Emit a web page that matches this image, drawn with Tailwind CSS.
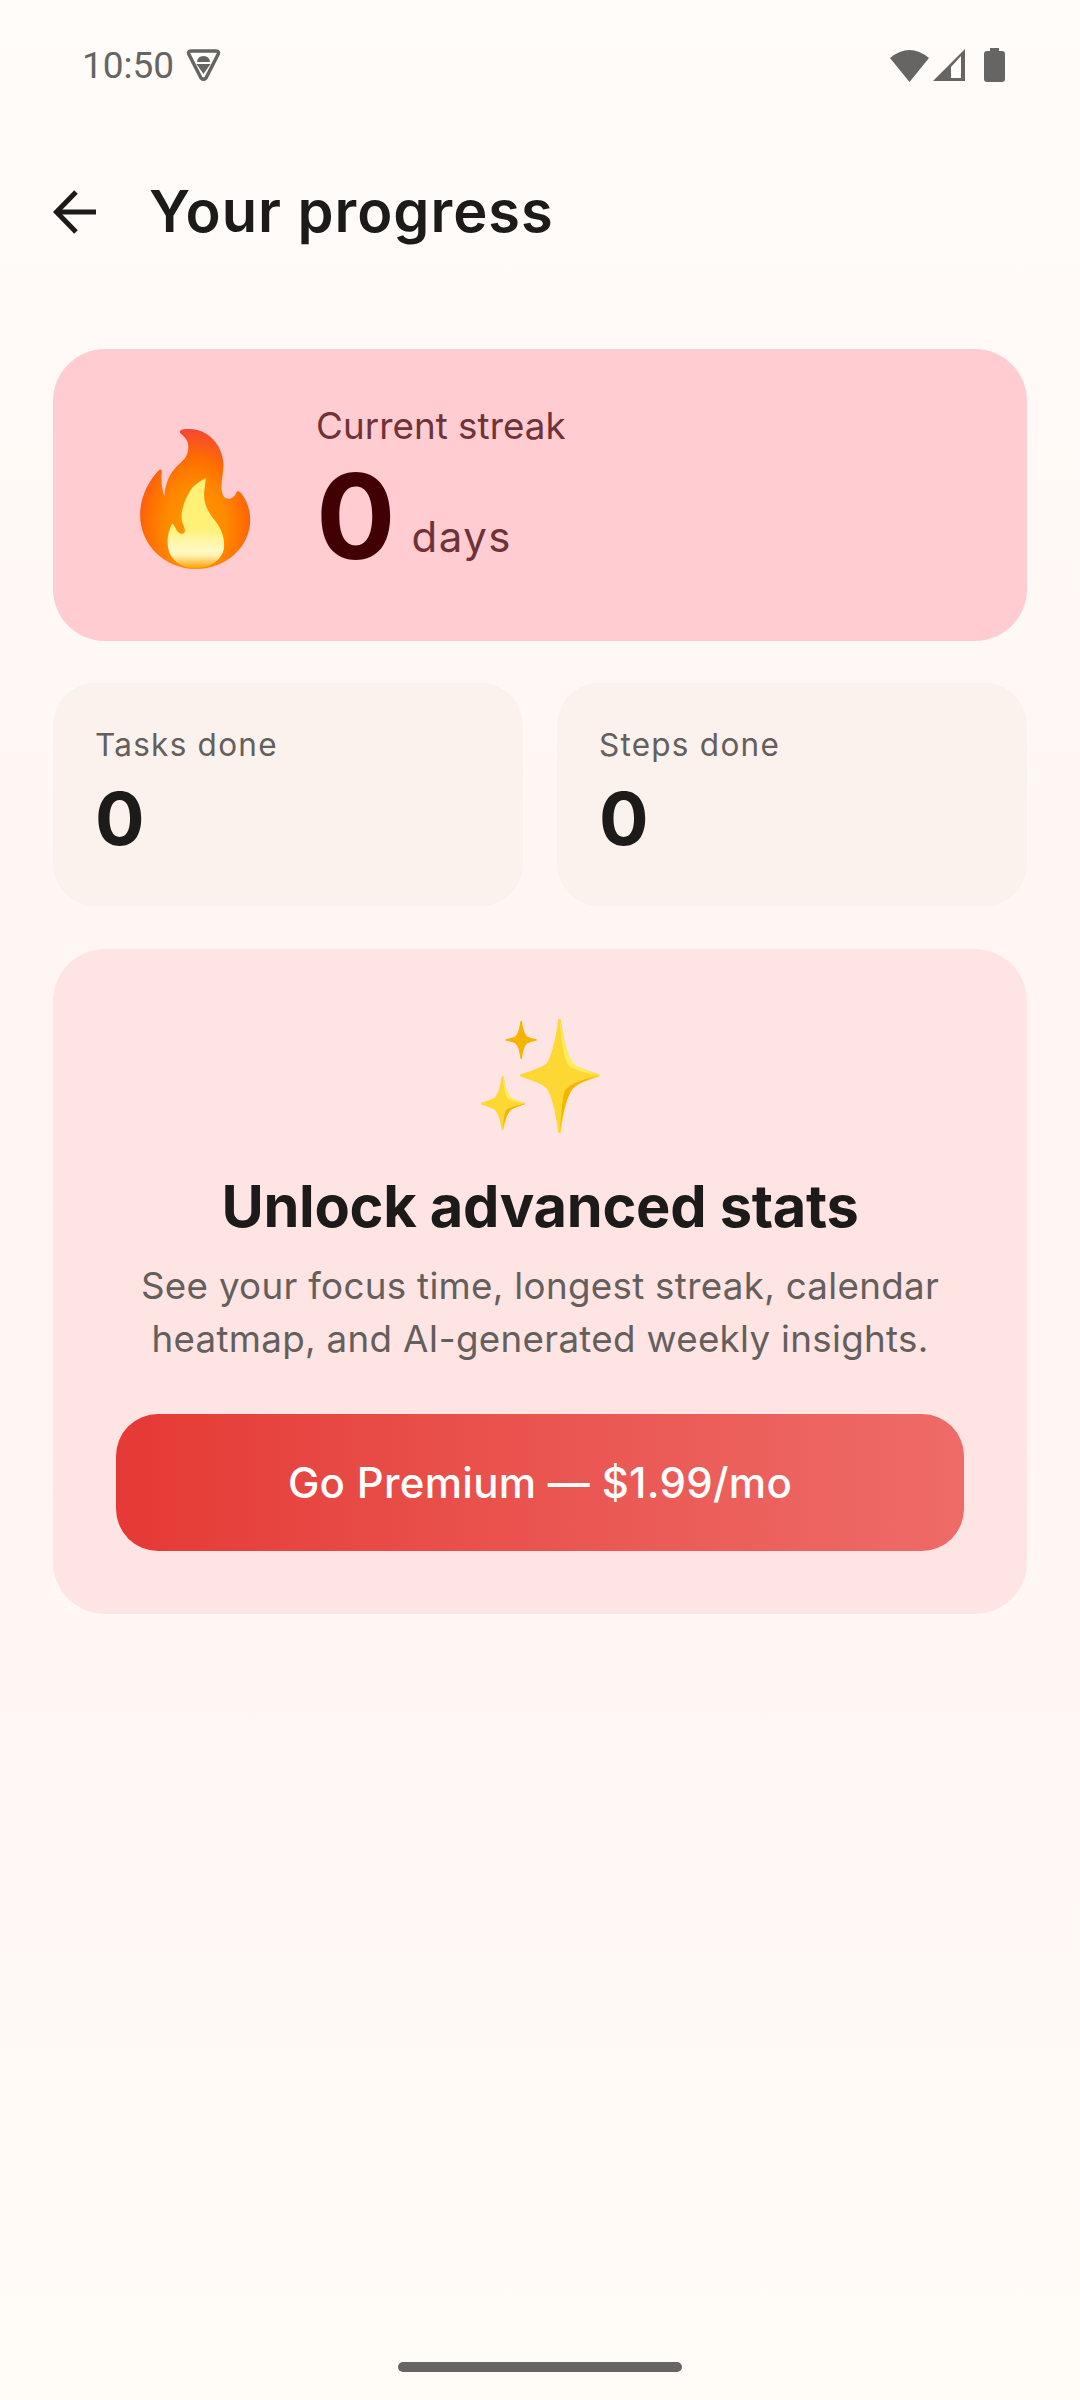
<!DOCTYPE html>
<html lang="en">
<head>
  <meta charset="UTF-8" />
  <meta name="viewport" content="width=device-width, initial-scale=1.0" />
  <title>Your progress</title>
  <script src="https://cdn.jsdelivr.net/npm/@tailwindcss/browser@4"></script>
</head>
<body class="bg-[#fff9f6] font-['Inter',sans-serif]">
  <div class="relative w-[1080px] h-[2400px] overflow-hidden bg-gradient-to-b from-[#fffcf9] via-[#fff5f2] to-[#fffbf7]">

    <!-- Status bar -->
    <div class="h-[130px] pl-[82px] pr-[75px] flex items-center justify-between text-[#666563]">
      <div class="flex items-center gap-[12px]">
        <span class="font-['Roboto',sans-serif] text-[37px] leading-none">10:50</span>
        <svg class="w-[35px] h-[34px]" viewBox="0 0 35 34">
          <path d="M5 3h25q3.500 0 2 3.500L20 30q-2.500 2.500-5 0L3 6.500Q1.500 3 5 3Z" fill="none" stroke="#666563" stroke-width="3.500" stroke-linejoin="round"/>
          <path d="M11 14q.5-6 6.500-6t6.500 6Z" fill="#666563"/>
          <path d="M10.500 16h14l-7 10Z" fill="#666563"/>
        </svg>
      </div>
      <div class="flex items-center">
        <svg class="w-[39px] h-[33px]" viewBox="0 0 39 33"><path d="M0 9Q19.500-7 39 9L19.500 33Z" fill="#666563"/></svg>
        <svg class="w-[32px] h-[32px] ml-[4px]" viewBox="0 0 32 32"><path d="M32 0V32H0Z" fill="#666563"/><path d="M28 7 18 18V29H28Z" fill="#fffcf9"/></svg>
        <svg class="w-[21px] h-[34px] ml-[19px]" viewBox="0 0 21 34"><path d="M6 0h9v3h3q3 0 3 3v25q0 3-3 3H3q-3 0-3-3V6q0-3 3-3h3Z" fill="#666563"/></svg>
      </div>
    </div>

    <!-- Header -->
    <div class="mt-[40px] h-[84px] pl-[53px] flex items-center">
      <svg class="w-[44px] h-[44px]" viewBox="0 0 44 44" fill="none" stroke="#1c1b19" stroke-width="5">
        <path d="M43 22H4"/>
        <path d="M23 2 3.500 22 23 42"/>
      </svg>
      <h1 class="ml-[52px] text-[57.750px] leading-none tracking-[1px] font-semibold text-[#1c1b19]">Your progress</h1>
    </div>

    <main class="px-[53px] pt-[95px] flex flex-col">

      <!-- Streak -->
      <section class="h-[292px] rounded-[52px] bg-[#ffccd1] flex items-center pl-[86px]">
        <svg class="w-[112px] h-[140px] mt-[8px]" viewBox="90 57 326 413">
          <defs>
            <radialGradient id="flameOuter" gradientUnits="userSpaceOnUse" cx="255" cy="345" r="295" gradientTransform="translate(255 345) scale(.72 1) translate(-255 -345)">
              <stop offset="0" stop-color="#ff9800"/>
              <stop offset=".42" stop-color="#ff8a00"/>
              <stop offset=".68" stop-color="#ff6d00"/>
              <stop offset="1" stop-color="#f44336"/>
            </radialGradient>
            <linearGradient id="flameInner" x1="0" y1="0" x2="0" y2="1">
              <stop offset="0" stop-color="#fff176"/>
              <stop offset=".55" stop-color="#fff176"/>
              <stop offset=".8" stop-color="#fff9c4"/>
              <stop offset=".86" stop-color="#fff3b0"/>
              <stop offset="1" stop-color="#ffa000"/>
            </linearGradient>
          </defs>
          <path fill="url(#flameOuter)" d="M210 62C215 55 240 56 260 60C300 70 335 110 337 160C338 190 325 225 335 250C342 268 365 268 375 245C378 238 382 240 388 245C405 265 416 295 416 325C416 405 345 470 255 470C165 470 91 400 91 310C91 260 115 210 147 178C152 174 156 178 155 185C152 205 155 235 163 255C165 215 180 185 205 162C225 145 235 130 233 105C232 90 222 80 212 72C208 68 207 65 210 62Z"/>
          <path fill="url(#flameInner)" d="M284 202C286 205 282 225 280 245C278 275 290 300 310 325C328 347 339 370 339 400C339 440 300 468 255 468C210 468 172 440 172 390C172 370 178 350 185 337C190 335 192 345 200 357C207 367 218 370 223 360C226 350 213 335 213 315C215 285 230 245 250 225C262 215 275 205 284 202Z"/>
        </svg>
        <div class="ml-[65px] flex flex-col">
          <span class="text-[36.750px] leading-[38px] tracking-[.05px] text-[#6f3237]">Current streak</span>
          <div class="flex items-baseline mt-[4px]">
            <span class="text-[118px] leading-[134px] font-bold text-[#410004]">0</span>
            <span class="ml-[16px] -translate-y-[7px] text-[42px] leading-none tracking-[1.500px] text-[#6f3237]">days</span>
          </div>
        </div>
      </section>

      <!-- Stats -->
      <div class="mt-[42px] grid grid-cols-2 gap-[34px]">
        <div class="h-[223px] rounded-[42px] bg-[#fbf1ed] pl-[42px] pt-[42px]">
          <p class="text-[31.500px] leading-[40px] tracking-[1.250px] text-[#655f5c]">Tasks done</p>
          <p class="mt-[9px] text-[73.500px] leading-[90px] font-bold text-[#1c1b19]">0</p>
        </div>
        <div class="h-[223px] rounded-[42px] bg-[#fbf1ed] pl-[42px] pt-[42px]">
          <p class="text-[31.500px] leading-[40px] tracking-[1.250px] text-[#655f5c]">Steps done</p>
          <p class="mt-[9px] text-[73.500px] leading-[90px] font-bold text-[#1c1b19]">0</p>
        </div>
      </div>

      <!-- Premium -->
      <section class="mt-[43px] h-[665px] rounded-[52px] bg-[#ffe4e4] flex flex-col items-center pt-[70px] px-[63px]">
        <svg class="w-[120px] h-[115px]" viewBox="126 95 342 330">
          <path fill="#f4b400" stroke="#f4b400" stroke-width="4" stroke-linejoin="round" d="M243 102C246 122 249 138 258 146C265 151 276 153 286 155C276 157 265 159 258 164C249 172 246 188 243 208C240 188 237 172 228 164C221 159 210 157 200 155C210 153 221 151 228 146C237 138 240 122 243 102Z"/>
          <path fill="#fdd835" stroke="#fdd835" stroke-width="8" stroke-linejoin="round" d="M353 99C358 135 366 195 388 226C405 240 437 249 464 257C437 265 405 274 388 290C366 320 358 380 353 419C348 380 340 320 318 290C301 274 270 265 244 257C270 249 301 240 318 226C340 195 348 135 353 99Z"/>
          <path fill="#ffee58" d="M353 95C360 135 370 192 392 222C408 236 437 247 468 257C437 252 398 244 378 228C362 200 358 140 353 95Z"/>
          <path fill="#f4b400" d="M468 257C437 267 408 278 392 294C370 322 360 380 353 423C358 385 358 335 368 300C385 278 430 265 468 257Z"/>
          <path fill="#fdd835" stroke="#fdd835" stroke-width="6" stroke-linejoin="round" d="M190 261C193 282 197 308 210 322C222 330 238 334 252 338C238 342 222 346 210 354C197 368 193 392 190 411C187 392 183 368 170 354C158 346 144 342 130 338C144 334 158 330 170 322C183 308 187 282 190 261Z"/>
          <path fill="#ffee58" d="M190 258C195 282 200 306 213 319C224 328 240 333 255 338C235 335 214 330 203 322C195 305 192 280 190 258Z"/>
          <path fill="#f4b400" d="M255 338C240 344 224 348 213 357C200 370 195 392 190 414C193 392 193 372 198 358C210 347 232 342 255 338Z"/>
        </svg>
        <h2 class="mt-[37px] text-[57.750px] leading-[70px] font-bold tracking-[-.3px] text-[#1c1b19] whitespace-nowrap">Unlock advanced stats</h2>
        <p class="mt-[18px] text-[36.750px] leading-[53px] tracking-[.3px] text-[#655f5c] text-center whitespace-nowrap">See your focus time, longest streak, calendar<br>heatmap, and AI-generated weekly insights.</p>
        <button class="mt-[49px] w-full h-[137px] rounded-[42px] bg-gradient-to-r from-[#e53935] to-[#ee6b68] text-white text-[42px] tracking-[.3px] font-medium">Go Premium — $1.99/mo</button>
      </section>
    </main>

    <!-- Home indicator -->
    <div class="absolute bottom-[28px] left-[398px] w-[284px] h-[10px] rounded-full bg-[#666563]"></div>
  </div>
</body>
</html>
